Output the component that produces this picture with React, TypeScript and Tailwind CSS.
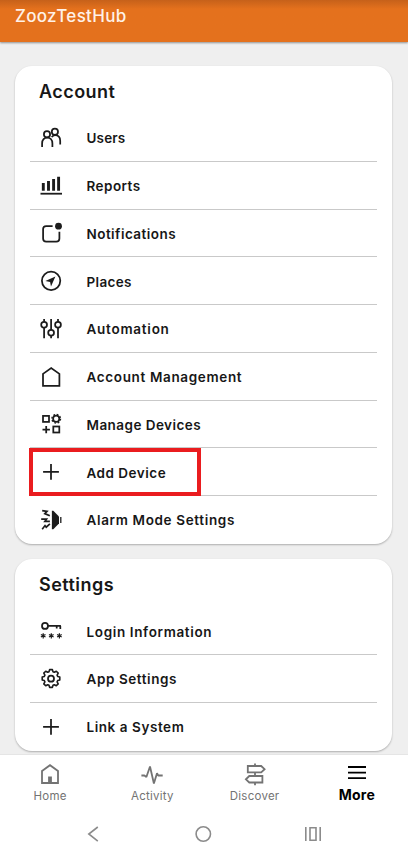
import type { ReactNode } from 'react';

type Item = { label: string; icon: ReactNode; tracking: string; highlighted?: boolean };

function Icon({ children }: { children: ReactNode }) {
  return (
    <svg
      viewBox="0 0 24 24"
      className="w-6 h-6 shrink-0"
      fill="none"
      stroke="#1c1c1c"
      strokeWidth="1.75"
    >
      {children}
    </svg>
  );
}

const plus = <path d="M12 3.9v15.8M4.1 11.8h15.8" />;

// one tooth per 45 degrees, rounded into the body of the gear
const gearPath =
  'M10.6 2.6h2.8l.6 2.1 1.3.6 2-1.1 1.9 1.9-1.1 2 .6 1.3 2.1.6v3l-2.1.6-.6 1.3 1.1 2-1.9 1.9-2-1.1-1.3.6-.6 2.1h-2.8l-.6-2.1-1.3-.6-2 1.1-1.9-1.9 1.1-2-.6-1.3-2.1-.6v-3l2.1-.6.6-1.3-1.1-2 1.9-1.9 2 1.1 1.3-.6z';

const ACCOUNT: Item[] = [
  {
    label: 'Users',
    tracking: 'tracking-[0.15px]',
    icon: (
      <>
        <circle cx="8" cy="8.2" r="3.1" />
        <circle cx="15.9" cy="5.8" r="3.1" />
        <path d="M3.1 21v-3.6c0-3.6 2.2-5.8 5.1-5.8s5.2 2.2 5.2 5.8V21M12.7 11.1c.9-1.5 2-2.1 3.3-2.1 3.1 0 5.2 2.3 5.2 5.8v3.7" />
      </>
    ),
  },
  {
    label: 'Reports',
    tracking: 'tracking-[0.45px]',
    icon: (
      <>
        <path d="M4.3 9v7.8M9.5 7v9.8M14.6 5v11.8M19.6 2.7v14.1" strokeWidth="2.9" />
        <path d="M1.5 19.7H23" strokeWidth="1.8" />
      </>
    ),
  },
  {
    label: 'Notifications',
    tracking: 'tracking-[0.46px]',
    icon: (
      <>
        <path d="M13.6 5H7.2C5.2 5 4.1 6.1 4.1 8.1v9.4c0 2 1.1 3.1 3.1 3.1h10.1c2 0 3.1-1.1 3.1-3.1v-6.7" />
        <circle cx="19.5" cy="5.2" r="3.4" fill="#1c1c1c" stroke="none" />
      </>
    ),
  },
  {
    label: 'Places',
    tracking: 'tracking-[0.35px]',
    icon: (
      <>
        <circle cx="12.1" cy="11.8" r="9.2" />
        <path d="M16.4 7.6 6.4 12l4.7 1 .9 4.4z" fill="#1c1c1c" stroke="none" />
      </>
    ),
  },
  {
    label: 'Automation',
    tracking: 'tracking-[0.75px]',
    icon: (
      <>
        <path d="M5.1 2v2.8M5.1 10.8v10.5M12.1 2v10.7M12.1 18.7v2.6M19 2v2.8M19 10.8v10.5" />
        <circle cx="5.1" cy="7.8" r="2.9" />
        <circle cx="12.1" cy="15.7" r="2.9" />
        <circle cx="19" cy="7.8" r="2.9" />
      </>
    ),
  },
  {
    label: 'Account Management',
    tracking: 'tracking-[0.65px]',
    icon: <path d="M4 8.9 12.2 3l8.2 5.9v11.9H4z" />,
  },
  {
    label: 'Manage Devices',
    tracking: 'tracking-[0.45px]',
    icon: (
      <>
        <rect x="4" y="3.9" width="6" height="6" />
        <rect x="14.3" y="14.5" width="6" height="6" />
        <path d="M7.2 14v7.2M3.5 17.6h7.4" />
        <circle cx="17.2" cy="6.8" r="3.1" />
        <circle cx="17.2" cy="6.8" r="4.3" strokeWidth="1.4" strokeDasharray="1.7 1.677" />
      </>
    ),
  },
  { label: 'Add Device', tracking: 'tracking-[0.5px]', icon: plus, highlighted: true },
  {
    label: 'Alarm Mode Settings',
    tracking: 'tracking-[0.65px]',
    icon: (
      <>
        <path d="M12.9 2.8h1.4L20 8.4v7.2l-5.7 5.7h-1.4z" fill="#1c1c1c" stroke="none" />
        <path d="M21.8 9v6" strokeWidth="1.3" />
        <path
          d="M3.2 2.6 8 3.4 5.8 5.6l5 2.2M2.2 11.2h5.3l-1.6 2.1h5M3.2 21.2 6 17.6l1.2 1.6 3.7-3.4"
          strokeWidth="1.7"
        />
      </>
    ),
  },
];

const SETTINGS: Item[] = [
  {
    label: 'Login Information',
    tracking: 'tracking-[0.64px]',
    icon: (
      <>
        <circle cx="6" cy="6.9" r="3" />
        <path d="M9 6.9h12.9M21.3 6.9v3.2M17.7 6.9v2.5" />
        <path
          d="M4.2 14.2v5.2M1.9 15.5l4.6 2.6M6.5 15.5l-4.6 2.6M12.3 14.2v5.2M10 15.5l4.6 2.6M14.6 15.5 10 18.1M20.4 14.2v5.2M18.1 15.5l4.6 2.6M22.7 15.5l-4.6 2.6"
          strokeWidth="1.2"
        />
      </>
    ),
  },
  {
    label: 'App Settings',
    tracking: 'tracking-[0.58px]',
    icon: (
      <>
        <path d={gearPath} strokeWidth="1.6" strokeLinejoin="round" />
        <circle cx="12" cy="11.7" r="3" />
      </>
    ),
  },
  { label: 'Link a System', tracking: 'tracking-[0.56px]', icon: plus },
];

function Section({ title, items }: { title: string; items: Item[] }) {
  return (
    <section className="rounded-[17px] bg-white px-[15px] shadow-[0_1px_2px_rgba(0,0,0,0.28)]">
      <h2 className="h-12 pl-[9px] pt-[3px] flex items-center text-[18px] font-semibold tracking-[0.45px] text-[#171717]">
        {title}
      </h2>
      <ul>
        {items.map(({ label, icon, tracking, highlighted }) => (
          <li
            key={label}
            className="relative h-[47.75px] pt-px flex items-center pl-[8.5px] gap-[24px] border-b border-[#c9c9c9] last:border-transparent"
          >
            <Icon>{icon}</Icon>
            <span className={`pt-px text-[13.5px] font-semibold whitespace-nowrap text-[#171717] ${tracking}`}>
              {label}
            </span>
            {highlighted && (
              <span className="absolute -left-px top-0 w-[172px] h-[47.5px] border-4 border-[#ea1c1f]" />
            )}
          </li>
        ))}
      </ul>
    </section>
  );
}

const TABS = [
  {
    label: 'Home',
    icon: (
      <>
        <path d="M4 9l8-5.8L20 9v12H4z" />
        <path d="M12 14.5V21" strokeWidth="3.8" />
      </>
    ),
  },
  {
    label: 'Activity',
    icon: <path d="M1.4 13.5h3l2 1.5L10 4.5l3.9 17L17 11.3l1.2 2.2h4.5" strokeLinejoin="bevel" />,
  },
  {
    label: 'Discover',
    icon: (
      <>
        <path d="M12 1.5v2.3M12 10.8v3M12 20.8v2.4" />
        <path d="M4.8 4h13.4l3.4 3.2-3.4 3.2H4.8zM19.4 14H6.3l-3.4 3.3 3.4 3.2h13.1z" />
      </>
    ),
  },
  { label: 'More', icon: <path d="M3 5h18M3 10.6h18M3 16.2h18" />, active: true },
];

export default function App() {
  return (
    <div className="h-[858px] flex flex-col overflow-hidden bg-[#efefef] font-[Inter,sans-serif]">
      <header className="relative h-[42px] shrink-0 pl-[15px] bg-linear-to-b from-[#c6611a] to-[#e4711d] to-[9px] shadow-[0_1px_2px_rgba(0,0,0,0.4)]">
        <h1 className="pt-[4px] text-[17px] leading-6 font-medium tracking-[0.3px] text-[#fff1e8]">ZoozTestHub</h1>
      </header>

      <main className="h-[712px] shrink-0 pt-6 pl-[15px] pr-4 flex flex-col gap-[15.5px]">
        <Section title="Account" items={ACCOUNT} />
        <Section title="Settings" items={SETTINGS} />
      </main>

      <footer className="grow bg-white border-t border-[#e5e5e5]">
        <nav className="grid grid-cols-4 h-[53px] pt-[7px] -ml-px">
          {TABS.map(({ label, icon, active }) => (
            <div key={label} className="flex flex-col items-center">
              <svg
                viewBox="0 0 24 24"
                className={`w-6 h-6 ${active ? 'text-black' : 'text-[#737373]'}`}
                fill="none"
                stroke="currentColor"
                strokeWidth="1.8"
              >
                {icon}
              </svg>
              <span
                className={`leading-[18px] ${
                  active
                    ? 'text-[14px] font-bold tracking-[0.2px] text-black'
                    : 'text-[11.5px] tracking-[0.25px] pt-px text-[#737373]'
                }`}
              >
                {label}
              </span>
            </div>
          ))}
        </nav>

        {/* Android navigation buttons */}
        <div className="flex justify-center gap-[86px] pt-[14px] pr-[2px] text-[#8b8b8b]">
          <svg viewBox="0 0 24 24" className="w-6 h-6" fill="none" stroke="currentColor" strokeWidth="1.6">
            <path d="M16.8 5 7.8 12l9 7.1" />
          </svg>
          <svg viewBox="0 0 24 24" className="w-6 h-6" fill="none" stroke="currentColor" strokeWidth="1.6">
            <circle cx="12.3" cy="12" r="7.2" />
          </svg>
          <svg viewBox="0 0 24 24" className="w-6 h-6" fill="none" stroke="currentColor" strokeWidth="1.6">
            <path d="M4.8 5v14M19.2 5v14M9 5.8h6v12.4H9z" />
          </svg>
        </div>
      </footer>
    </div>
  );
}
